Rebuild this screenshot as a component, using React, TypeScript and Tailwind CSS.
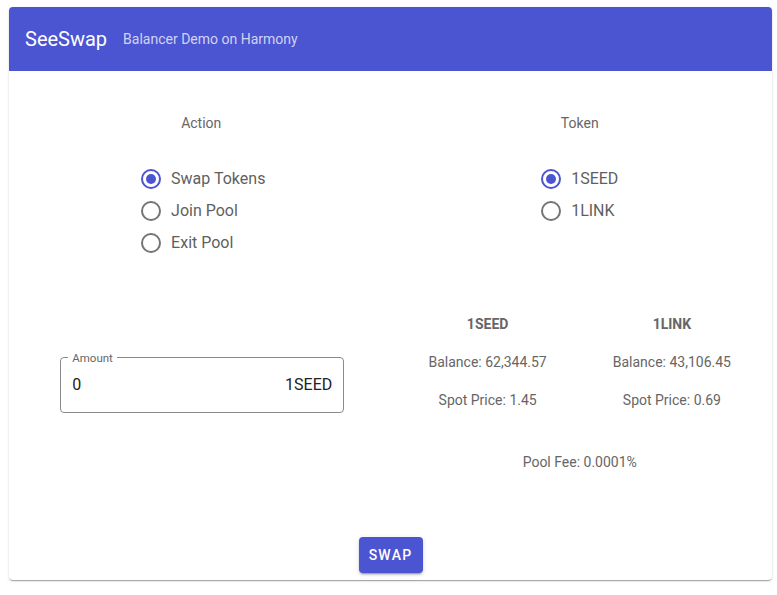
import { useState } from 'react'

const font = { fontFamily: 'Roboto, "Liberation Sans", sans-serif' }

function Radio({ checked, label, onClick }: { checked: boolean; label: string; onClick: () => void }) {
    return (
        <div className="flex h-8 cursor-pointer items-center whitespace-nowrap" onClick={onClick}>
            <span
                className={`flex h-5 w-5 shrink-0 items-center justify-center rounded-full border-2 ${checked ? 'border-[#4b54d1]' : 'border-[#757575]'}`}
            >
                {checked && <span className="h-2.5 w-2.5 rounded-full bg-[#4b54d1]" />}
            </span>
            <span className="ml-[10px] text-base text-[#5f5f5f]">{label}</span>
        </div>
    )
}

function TokenStats({ name, balance, price }: { name: string; balance: string; price: string }) {
    return (
        <div className="flex flex-col items-center text-sm text-[#666]">
            <div className="h-5 font-bold leading-5">{name}</div>
            <div className="mt-[18px] h-5 leading-5">Balance: {balance}</div>
            <div className="mt-[18px] h-5 leading-5">Spot Price: {price}</div>
        </div>
    )
}

export default function App() {
    const [action, setAction] = useState('swap')
    const [token, setToken] = useState('1SEED')
    const [amount, setAmount] = useState('0')

    return (
        <div className="min-h-[595px] bg-white pl-[9px] pt-[7px]" style={font}>
            <div className="w-[763px] overflow-hidden rounded bg-white shadow-[0_2px_1px_-1px_rgba(0,0,0,0.2),0_1px_1px_0_rgba(0,0,0,0.14),0_1px_3px_0_rgba(0,0,0,0.12)]">
                <div className="flex h-16 items-center bg-[#4b54d1] px-4">
                    <span className="text-xl text-white">SeeSwap</span>
                    <span className="ml-4 text-sm text-white/75">Balancer Demo on Harmony</span>
                </div>

                <div className="px-2">
                    <div className="grid grid-cols-2 gap-x-[10px] pt-[42px]">
                        <div className="flex flex-col items-center">
                            <div className="h-5 text-sm leading-5 text-[#666]">Action</div>
                            <div className="ml-[4px] mt-[30px] flex flex-col">
                                <Radio checked={action === 'swap'} label="Swap Tokens" onClick={() => setAction('swap')} />
                                <Radio checked={action === 'join'} label="Join Pool" onClick={() => setAction('join')} />
                                <Radio checked={action === 'exit'} label="Exit Pool" onClick={() => setAction('exit')} />
                            </div>
                        </div>
                        <div className="flex flex-col items-center">
                            <div className="h-5 text-sm leading-5 text-[#666]">Token</div>
                            <div className="mt-[30px] flex flex-col">
                                <Radio checked={token === '1SEED'} label="1SEED" onClick={() => setToken('1SEED')} />
                                <Radio checked={token === '1LINK'} label="1LINK" onClick={() => setToken('1LINK')} />
                            </div>
                        </div>
                    </div>

                    <div className="mt-[55px] grid grid-cols-2 gap-x-[10px]">
                        <div className="flex justify-center pt-[43px]">
                            <div className="relative ml-[2px] flex h-14 w-[284px] items-center rounded border border-[#8a8a8a] px-[11px]">
                                <span className="absolute -top-[8px] left-[7px] bg-white px-[4px] text-[11.5px] leading-4 text-[#666]">
                                    Amount
                                </span>
                                <input
                                    className="w-full bg-transparent text-base text-[#222] outline-none"
                                    value={amount}
                                    onChange={e => setAmount(e.target.value)}
                                />
                                <span className="text-base text-[#222]">{token}</span>
                            </div>
                        </div>
                        <div className="flex flex-col">
                            <div className="grid grid-cols-2">
                                <TokenStats name="1SEED" balance="62,344.57" price="1.45" />
                                <TokenStats name="1LINK" balance="43,106.45" price="0.69" />
                            </div>
                            <div className="mt-[42px] h-5 text-center text-sm leading-5 text-[#666]">Pool Fee: 0.0001%</div>
                        </div>
                    </div>

                    <div className="flex justify-center pb-[7px] pt-[65px]">
                        <button className="h-9 w-16 cursor-pointer rounded bg-[#4b54d1] text-sm font-medium tracking-[1.25px] text-white shadow-[0_3px_1px_-2px_rgba(0,0,0,0.2),0_2px_2px_0_rgba(0,0,0,0.14),0_1px_5px_0_rgba(0,0,0,0.12)]">
                            SWAP
                        </button>
                    </div>
                </div>
            </div>
        </div>
    )
}
